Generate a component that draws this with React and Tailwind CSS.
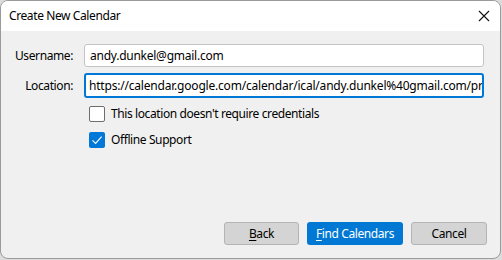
export default function App() {
  const font = { fontFamily: '"Segoe UI", "Noto Sans", "Open Sans", sans-serif' };
  return (
    <div className="w-[502px] h-[260px] bg-[#dcdcdc]" style={font}>
      <div className="w-[501px] h-[259px] rounded-[8px] border border-[#9a9a9a] overflow-hidden flex flex-col bg-[#f0f0f0] text-[12px] text-black leading-none tracking-[-0.4px]">
        <div className="h-[30px] bg-white flex items-center justify-between pl-[8px] pr-[9px] shrink-0">
          <span className="text-[12px]">Create New Calendar</span>
          <svg width="12" height="12" viewBox="0 0 12 12" className="mr-[1px]">
            <path d="M1 1 L11 11 M11 1 L1 11" stroke="#111" strokeWidth="1.1" fill="none" />
          </svg>
        </div>
        <div className="flex-1 flex flex-col pt-[13px] pr-[16px] pb-[13px]">
          <div className="flex items-center h-[23px]">
            <div className="w-[72px] text-right">Username:</div>
            <div className="ml-[11px] flex-1 h-[23px] bg-white border border-[#c4c4c4] rounded-[3px] flex items-center pl-[5px] tracking-[-0.25px]">
              andy.dunkel@gmail.com
            </div>
          </div>
          <div className="flex items-center h-[25px] mt-[6px]">
            <div className="w-[72px] text-right">Location:</div>
            <div className="ml-[11px] flex-1 h-[25px] bg-white border-2 border-[#0078d7] rounded-[3px] flex items-center pl-[4px] overflow-hidden whitespace-nowrap tracking-[-0.2px]">
              <span className="inline-block w-[1px] h-[15px] bg-black mr-[-1px]"></span>
              <span>https://calendar.google.com/calendar/ical/andy.dunkel%40gmail.com/private</span>
            </div>
          </div>
          <div className="flex items-center mt-[7px] ml-[88px] h-[18px]">
            <div className="w-[16px] h-[16px] bg-white border border-[#6e6e6e] rounded-[2px]"></div>
            <span className="ml-[6px]">This location doesn't require credentials</span>
          </div>
          <div className="flex items-center mt-[8px] ml-[88px] h-[18px]">
            <div className="w-[16px] h-[16px] bg-[#0078d7] rounded-[2px] flex items-center justify-center">
              <svg width="12" height="12" viewBox="0 0 12 12">
                <path d="M1.5 6.3 L4.6 9.4 L10.6 2.6" stroke="white" strokeWidth="1.1" fill="none" />
              </svg>
            </div>
            <span className="ml-[6px]">Offline Support</span>
          </div>
          <div className="flex-1"></div>
          <div className="flex justify-end gap-[8px] mr-[-3px]">
            <div className="w-[75px] h-[23px] bg-[#d4d4d4] border border-[#b4b4b4] rounded-[3px] flex items-center justify-center">
              <span><span className="underline underline-offset-2">B</span>ack</span>
            </div>
            <div className="w-[96px] h-[23px] bg-[#0078d4] text-white rounded-[3px] flex items-center justify-center">
              <span><span className="underline underline-offset-2">F</span>ind Calendars</span>
            </div>
            <div className="w-[76px] h-[23px] bg-[#d4d4d4] border border-[#b4b4b4] rounded-[3px] flex items-center justify-center">
              <span>Cancel</span>
            </div>
          </div>
        </div>
      </div>
    </div>
  );
}
